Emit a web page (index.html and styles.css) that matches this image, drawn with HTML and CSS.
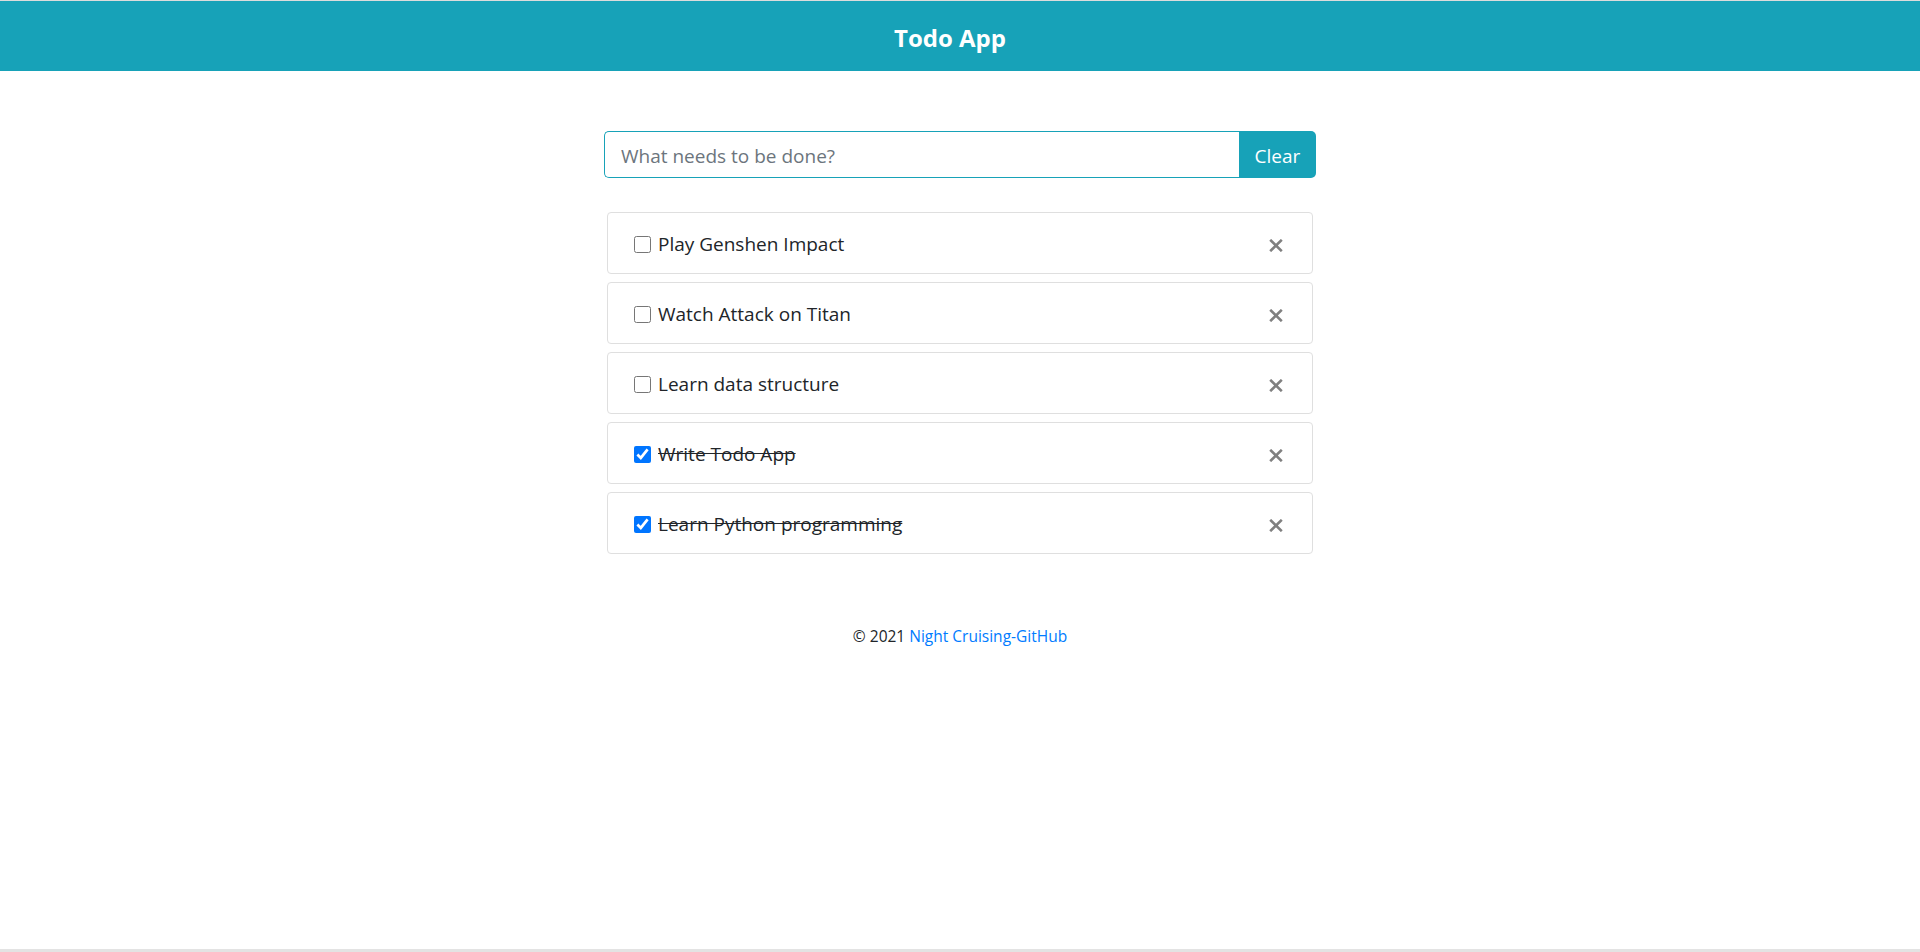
FILE: index.html
```html
<!DOCTYPE html>
<html lang="en">
<head>
<meta charset="utf-8">
<title>Todo App</title>
<link rel="stylesheet" href="styles.css">
</head>
<body>
<header class="topbar">
  <h1 class="brand">Todo App</h1>
</header>
<main class="main">
  <div class="input-group">
    <input class="todo-input" type="text" placeholder="What needs to be done?">
    <button class="clear-btn" type="button">Clear</button>
  </div>
  <ul class="todo-list">
    <li class="todo-item">
      <label class="todo-label"><input type="checkbox" class="todo-check"><span class="todo-text">Play Genshen Impact</span></label>
      <button class="remove" type="button" aria-label="Remove"><svg width="14" height="13" viewBox="0 0 14 13"><path d="M1.2 0.8 L12.8 12.2 M12.8 0.8 L1.2 12.2" stroke="#808080" stroke-width="2.6" fill="none"/></svg></button>
    </li>
    <li class="todo-item">
      <label class="todo-label"><input type="checkbox" class="todo-check"><span class="todo-text">Watch Attack on Titan</span></label>
      <button class="remove" type="button" aria-label="Remove"><svg width="14" height="13" viewBox="0 0 14 13"><path d="M1.2 0.8 L12.8 12.2 M12.8 0.8 L1.2 12.2" stroke="#808080" stroke-width="2.6" fill="none"/></svg></button>
    </li>
    <li class="todo-item">
      <label class="todo-label"><input type="checkbox" class="todo-check"><span class="todo-text">Learn data structure</span></label>
      <button class="remove" type="button" aria-label="Remove"><svg width="14" height="13" viewBox="0 0 14 13"><path d="M1.2 0.8 L12.8 12.2 M12.8 0.8 L1.2 12.2" stroke="#808080" stroke-width="2.6" fill="none"/></svg></button>
    </li>
    <li class="todo-item done">
      <label class="todo-label"><input type="checkbox" class="todo-check" checked><span class="todo-text">Write Todo App</span></label>
      <button class="remove" type="button" aria-label="Remove"><svg width="14" height="13" viewBox="0 0 14 13"><path d="M1.2 0.8 L12.8 12.2 M12.8 0.8 L1.2 12.2" stroke="#808080" stroke-width="2.6" fill="none"/></svg></button>
    </li>
    <li class="todo-item done">
      <label class="todo-label"><input type="checkbox" class="todo-check" checked><span class="todo-text">Learn Python programming</span></label>
      <button class="remove" type="button" aria-label="Remove"><svg width="14" height="13" viewBox="0 0 14 13"><path d="M1.2 0.8 L12.8 12.2 M12.8 0.8 L1.2 12.2" stroke="#808080" stroke-width="2.6" fill="none"/></svg></button>
    </li>
  </ul>
  <footer class="footer">© 2021 <a class="footer-link" href="#">Night Cruising-GitHub</a></footer>
</main>
<div class="bottom-strip"></div>
</body>
</html>
```
FILE: styles.css
```css
* { box-sizing: border-box; }
html, body {
  margin: 0;
  padding: 0;
  background: #fff;
  font-family: "Open Sans", "Noto Sans", "Liberation Sans", sans-serif;
  color: #212529;
}
.topbar {
  border-top: 1px solid #dcdcdc;
  background: #17a2b8;
  height: 71px;
  display: flex;
  align-items: center;
  justify-content: center;
  padding-right: 20px;
}
.brand {
  margin: 0;
  color: #fff;
  font-size: 24px;
  font-weight: 700;
  line-height: 1;
  padding-top: 3px;
}
.main {
  width: 712px;
  margin: 60px auto 0;
  display: flex;
  flex-direction: column;
}
.input-group {
  display: flex;
  height: 47px;
}
.todo-input {
  flex: 1;
  min-width: 0;
  height: 47px;
  border: 1px solid #17a2b8;
  border-right: none;
  border-radius: 5px 0 0 5px;
  padding: 2px 16px 0;
  font-family: inherit;
  font-size: 19px;
  color: #495057;
  outline: none;
}
.todo-input::placeholder { color: #6c757d; }
.clear-btn {
  width: 77px;
  height: 47px;
  border: none;
  border-radius: 0 5px 5px 0;
  background: #17a2b8;
  color: #fff;
  font-family: inherit;
  font-size: 19px;
  padding: 2px 0 0;
}
.todo-list {
  list-style: none;
  margin: 34px 3px 0;
  padding: 0;
  display: flex;
  flex-direction: column;
  gap: 8px;
}
.todo-item {
  height: 62px;
  border: 1px solid #dfdfdf;
  border-radius: 4px;
  padding: 0 25px;
  display: flex;
  align-items: center;
  justify-content: space-between;
}
.todo-label {
  display: flex;
  align-items: center;
  font-size: 19px;
  line-height: 30px;
  padding-top: 2px;
}
.todo-check {
  width: 17px;
  height: 17px;
  margin: 1px 7px 0 1px;
}
.done .todo-text { text-decoration: line-through; }
.remove {
  border: none;
  background: none;
  padding: 0;
  width: 14px;
  height: 13px;
  display: flex;
  margin-top: 5px;
  margin-right: 4px;
}
.footer {
  margin-top: 71px;
  text-align: center;
  font-size: 15.5px;
  color: #212529;
}
.footer-link {
  color: #007bff;
  text-decoration: none;
}
.bottom-strip {
  position: fixed;
  left: 0;
  right: 0;
  bottom: 0;
  height: 3px;
  background: #e3e3e3;
}
```
